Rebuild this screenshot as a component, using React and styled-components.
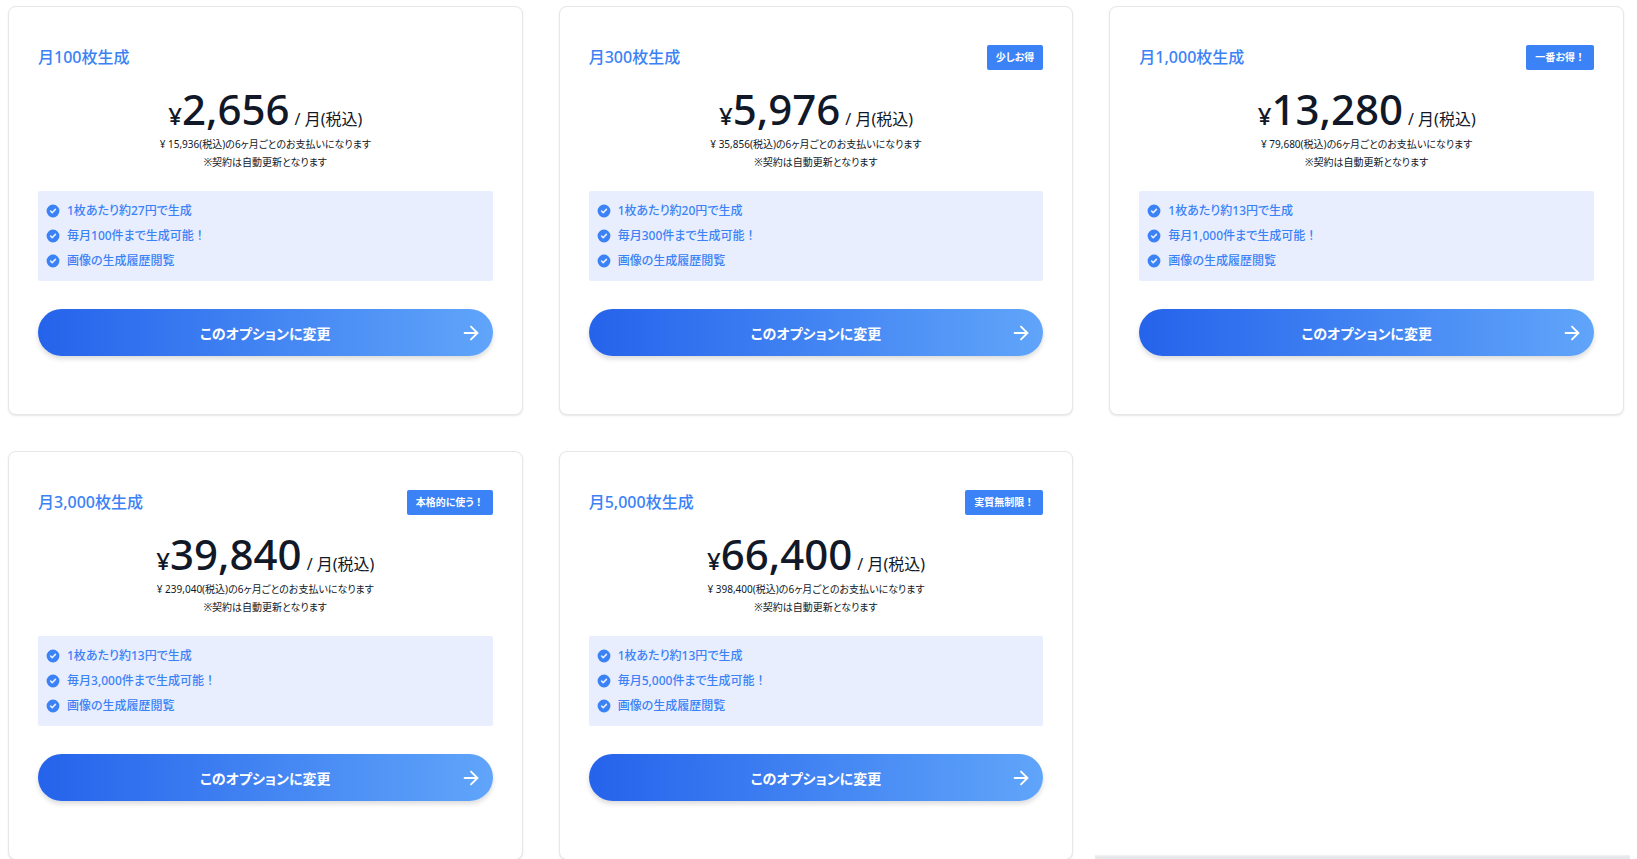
import React from "react";
import styled, { createGlobalStyle } from "styled-components";
import { ArrowRight } from "lucide-react";

// Styled Components

const GlobalStyle = createGlobalStyle`
  * {
    box-sizing: border-box;
  }

  body {
    margin: 0;
    background: #fff;
    color: #111827;
    font-family: 'Noto Sans', 'Noto Sans CJK JP', sans-serif;
    font-feature-settings: 'palt';
  }
`;

const PlanGrid = styled.main`
  display: grid;
  grid-template-columns: repeat(3, 1fr);
  gap: 36px;
  padding: 6px 13px 0 8px;
`;

const Card = styled.section`
  padding: 38px 29px 58px;
  background: #fff;
  border: 1px solid #e5e7eb;
  border-radius: 8px;
  box-shadow: 0 1px 2px rgba(0, 0, 0, 0.1);
`;

const CardHeader = styled.div`
  display: flex;
  align-items: flex-start;
  justify-content: space-between;
  height: 25px;
`;

const PlanName = styled.h2`
  margin: 0;
  font-size: 16px;
  line-height: 24px;
  font-weight: 500;
  color: #3b82f6;
`;

const Badge = styled.span`
  padding: 0 9px;
  font-size: 10px;
  line-height: 25px;
  font-weight: 700;
  color: #fff;
  background: #3b82f6;
  border-radius: 2px;
`;

// The exclamation mark keeps its full width
const Mark = styled.span`
  font-feature-settings: normal;
`;

const Price = styled.p`
  display: flex;
  align-items: baseline;
  justify-content: center;
  margin: 15px 0 2px;
  line-height: 24px;
`;

const Yen = styled.span`
  font-size: 24px;
  font-weight: 500;
`;

const Amount = styled.span`
  font-size: 42px;
  line-height: 48px;
  font-weight: 500;
`;

const Unit = styled.span`
  margin-left: 5px;
  font-size: 16px;
`;

const Note = styled.p`
  margin: 0;
  font-size: 10px;
  line-height: 18px;
  text-align: center;
`;

const FeatureList = styled.ul`
  margin: 20px 0 28px;
  padding: 7px 7px 8px;
  list-style: none;
  background: #e8eefd;
  border-radius: 2px;
`;

const Feature = styled.li`
  display: flex;
  align-items: center;
  gap: 6px;
  font-size: 12px;
  line-height: 25px;
  font-weight: 500;
  color: #3b82f6;
`;

const ChangeButton = styled.button`
  display: grid;
  grid-template-columns: 22px 1fr 22px;
  align-items: center;
  width: 100%;
  height: 47px;
  padding: 0 11px;
  border: 0;
  border-radius: 24px;
  background: linear-gradient(90deg, #2563eb, #60a5fa);
  box-shadow: 0 3px 5px rgba(0, 0, 0, 0.14);
  color: #fff;
  font: inherit;
  font-size: 14px;
  font-weight: 600;
  font-feature-settings: inherit;
  cursor: pointer;
`;

const ButtonLabel = styled.span`
  grid-column: 2;
`;

const BottomBar = styled.aside`
  position: fixed;
  right: 7px;
  bottom: 0;
  width: 535px;
  height: 4px;
  background: linear-gradient(#f3f4f6, #e5e7eb 50%);
`;

const CheckIcon = () => (
  <svg width="16" height="16" viewBox="0 0 20 20" fill="currentColor" aria-hidden="true">
    <path
      fillRule="evenodd"
      d="M10 18a8 8 0 100-16 8 8 0 000 16zm3.707-9.293a1 1 0 00-1.414-1.414L9 10.586 7.707 9.293a1 1 0 00-1.414 1.414l2 2a1 1 0 001.414 0l4-4z"
      clipRule="evenodd"
    />
  </svg>
);

const plans = [
  { count: "100", price: "2,656", total: "15,936", unit: 27 },
  { count: "300", price: "5,976", total: "35,856", unit: 20, badge: "少しお得" },
  { count: "1,000", price: "13,280", total: "79,680", unit: 13, badge: <>一番お得<Mark>！</Mark></> },
  { count: "3,000", price: "39,840", total: "239,040", unit: 13, badge: <>本格的に使う<Mark>！</Mark></> },
  { count: "5,000", price: "66,400", total: "398,400", unit: 13, badge: <>実質無制限<Mark>！</Mark></> },
];

function PlanCard({ plan }) {
  return (
    <Card>
      <CardHeader>
        <PlanName>月{plan.count}枚生成</PlanName>
        {plan.badge && <Badge>{plan.badge}</Badge>}
      </CardHeader>
      <Price>
        <Yen>¥</Yen>
        <Amount>{plan.price}</Amount>
        <Unit>/ 月(税込)</Unit>
      </Price>
      <Note>¥ {plan.total}(税込)の6ヶ月ごとのお支払いになります</Note>
      <Note>※契約は自動更新となります</Note>
      <FeatureList>
        <Feature>
          <CheckIcon />
          <span>1枚あたり約{plan.unit}円で生成</span>
        </Feature>
        <Feature>
          <CheckIcon />
          <span>毎月{plan.count}件まで生成可能<Mark>！</Mark></span>
        </Feature>
        <Feature>
          <CheckIcon />
          <span>画像の生成履歴閲覧</span>
        </Feature>
      </FeatureList>
      <ChangeButton type="button">
        <ButtonLabel>このオプションに変更</ButtonLabel>
        <ArrowRight size={22} strokeWidth={2} />
      </ChangeButton>
    </Card>
  );
}

function App() {
  return (
    <>
      <GlobalStyle />
      <PlanGrid>
        {plans.map((plan) => (
          <PlanCard key={plan.count} plan={plan} />
        ))}
      </PlanGrid>
      <BottomBar />
    </>
  );
}

export default App;
